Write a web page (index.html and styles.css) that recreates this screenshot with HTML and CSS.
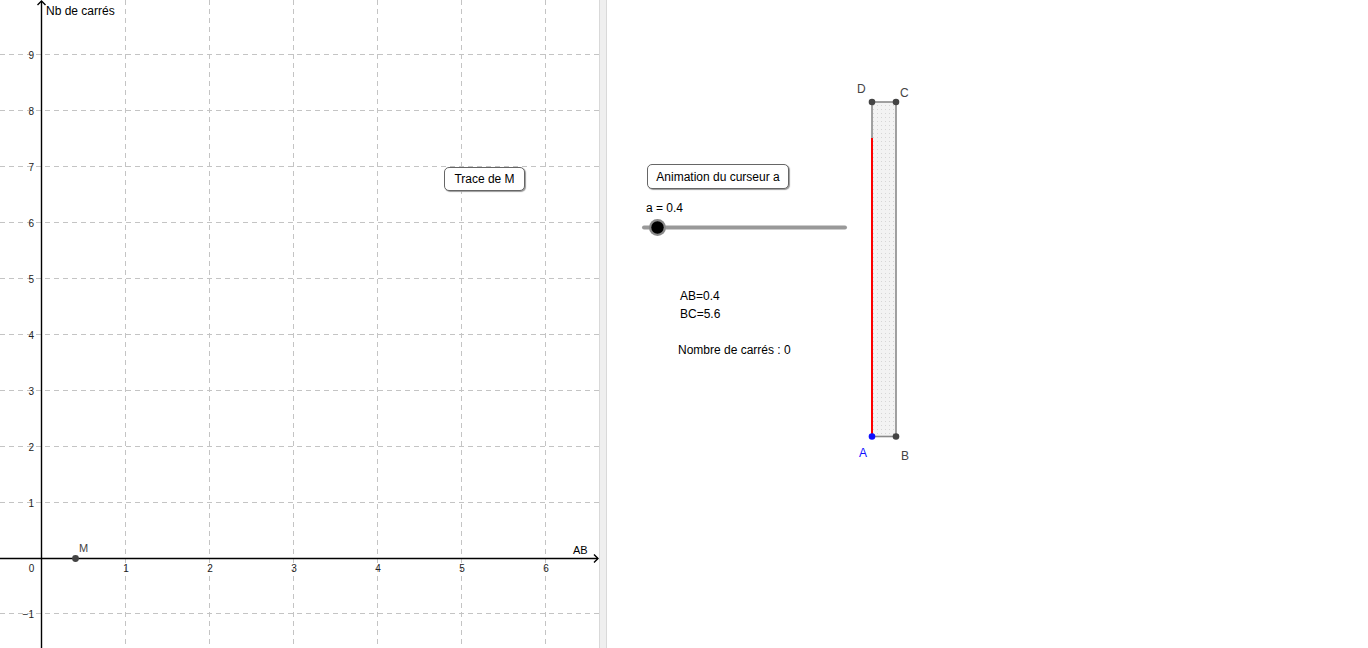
FILE: index.html
```html
<!DOCTYPE html>
<html lang="fr">

<head>
  <meta charset="UTF-8">
  <meta name="viewport" content="width=device-width, initial-scale=1.0">
  <title>Nombre de carrés</title>
  <link rel="stylesheet" href="styles.css">
</head>

<body>
  <div class="applet">
    <!-- vue graphique 1 : repère -->
    <div class="view view-left">
      <svg class="canvas" width="599" height="648" viewBox="0 0 599 648">
        <g class="grid">
          <line x1="125.5" y1="0" x2="125.5" y2="648" />
          <line x1="209.5" y1="0" x2="209.5" y2="648" />
          <line x1="293.5" y1="0" x2="293.5" y2="648" />
          <line x1="377.5" y1="0" x2="377.5" y2="648" />
          <line x1="461.5" y1="0" x2="461.5" y2="648" />
          <line x1="545.5" y1="0" x2="545.5" y2="648" />
          <line x1="0" y1="54.5" x2="599" y2="54.5" />
          <line x1="0" y1="110.5" x2="599" y2="110.5" />
          <line x1="0" y1="166.5" x2="599" y2="166.5" />
          <line x1="0" y1="222.5" x2="599" y2="222.5" />
          <line x1="0" y1="278.5" x2="599" y2="278.5" />
          <line x1="0" y1="334.5" x2="599" y2="334.5" />
          <line x1="0" y1="390.5" x2="599" y2="390.5" />
          <line x1="0" y1="446.5" x2="599" y2="446.5" />
          <line x1="0" y1="502.5" x2="599" y2="502.5" />
          <line x1="0" y1="613.5" x2="599" y2="613.5" />
        </g>
        <g class="axes">
          <line x1="41.5" y1="1" x2="41.5" y2="648" />
          <polyline points="37.5,5 41.5,1 45.5,5" />
          <line x1="0" y1="558.5" x2="598" y2="558.5" />
          <polyline points="594,554.5 598,558.5 594,562.5" />
        </g>
        <g class="ticks-y">
          <text x="34" y="59">9</text>
          <text x="34" y="115">8</text>
          <text x="34" y="171">7</text>
          <text x="34" y="227">6</text>
          <text x="34" y="283">5</text>
          <text x="34" y="339">4</text>
          <text x="34" y="395">3</text>
          <text x="34" y="451">2</text>
          <text x="34" y="507">1</text>
          <text x="34" y="618">&minus;1</text>
        </g>
        <g class="ticks-x">
          <text x="31.5" y="572">0</text>
          <text x="126" y="572">1</text>
          <text x="210" y="572">2</text>
          <text x="294" y="572">3</text>
          <text x="378" y="572">4</text>
          <text x="462" y="572">5</text>
          <text x="546" y="572">6</text>
        </g>
        <text class="axis-label" x="46" y="15">Nb de carrés</text>
        <text class="axis-label axis-label-x" x="573" y="554">AB</text>
        <circle class="pt" cx="75.5" cy="558.5" r="3.4" />
        <text class="pt-label pt-label-m" x="79" y="552">M</text>
      </svg>
      <button class="ggb-btn btn-trace">Trace de M</button>
    </div>

    <div class="splitter"></div>

    <!-- vue graphique 2 : rectangle et curseur -->
    <div class="view view-right">
      <svg class="canvas" width="761" height="648" viewBox="607 0 761 648">
        <defs>
          <pattern id="dots" width="4" height="4" patternUnits="userSpaceOnUse">
            <rect width="4" height="4" fill="#f3f3f3" />
            <rect x="1" y="1" width="1" height="1" fill="#d6d6d6" />
          </pattern>
        </defs>
        <text class="txt" x="646" y="212">a = 0.4</text>
        <line class="slider-track" x1="644" y1="227.5" x2="845" y2="227.5" />
        <circle class="slider-halo" cx="657.5" cy="227.5" r="8.5" />
        <circle class="slider-knob" cx="657.5" cy="227.5" r="6.2" />

        <text class="txt" x="680" y="300">AB=0.4</text>
        <text class="txt" x="680" y="318">BC=5.6</text>
        <text class="txt" x="678" y="354">Nombre de carrés : 0</text>

        <rect class="rect-fill" x="872" y="102" width="24" height="334.5" />
        <line class="seg-red" x1="872" y1="138" x2="872" y2="436.5" />
        <circle class="pt" cx="872" cy="102" r="3.3" />
        <circle class="pt" cx="896" cy="102" r="3.3" />
        <circle class="pt" cx="896" cy="436.5" r="3.3" />
        <circle class="pt pt-blue" cx="872" cy="436.5" r="3.3" />
        <text class="pt-label" x="857" y="93">D</text>
        <text class="pt-label" x="900" y="97">C</text>
        <text class="pt-label pt-label-a" x="859" y="457">A</text>
        <text class="pt-label" x="901" y="460">B</text>
      </svg>
      <button class="ggb-btn btn-anim">Animation du curseur a</button>
    </div>
  </div>
</body>

</html>
```

FILE: styles.css
```css
* {
  margin: 0;
  padding: 0;
  box-sizing: border-box;
}

body {
  background-color: white;
  font-family: "Liberation Sans", Arial, sans-serif;
  overflow: hidden;
}

.applet {
  display: flex;
  width: 1368px;
  height: 648px;
}

.view {
  position: relative;
  height: 648px;
  overflow: hidden;
}

.view-left {
  width: 599px;
}

.view-right {
  flex: 1;
}

.canvas {
  display: block;
}

.splitter {
  width: 8px;
  height: 648px;
  background-color: #efefef;
  border-left: 1px solid #d9d9d9;
  border-right: 1px solid #d9d9d9;
}

.grid line {
  stroke: #c4c4c4;
  stroke-width: 1;
  stroke-dasharray: 5 4;
}

.axes line,
.axes polyline {
  stroke: black;
  stroke-width: 1.4;
  fill: none;
}

.ticks-y text,
.ticks-x text {
  font-size: 10px;
  fill: #222;
}

.ticks-y text {
  text-anchor: end;
}

.ticks-x text {
  text-anchor: middle;
}

.axis-label {
  font-size: 12px;
  fill: black;
}

.axis-label-x {
  font-size: 11px;
}

.pt {
  fill: #444;
}

.pt-blue {
  fill: #1010ff;
}

.pt-label {
  font-size: 12px;
  fill: #444;
}

.pt-label-m {
  font-size: 11px;
}

.pt-label-a {
  fill: #1010ff;
}

.txt {
  font-size: 12px;
  fill: black;
}

.slider-track {
  stroke: #999;
  stroke-width: 4;
  stroke-linecap: round;
}

.slider-halo {
  fill: #8a8a8a;
}

.slider-knob {
  fill: black;
}

.rect-fill {
  fill: url(#dots);
  stroke: #8a8a8a;
  stroke-width: 1.6;
}

.seg-red {
  stroke: #ff0000;
  stroke-width: 2;
}

.ggb-btn {
  position: absolute;
  height: 24px;
  background-color: white;
  border: 1px solid #666;
  border-radius: 5px;
  box-shadow: 1px 1px 1px #999;
  font-family: "Liberation Sans", Arial, sans-serif;
  font-size: 12px;
  color: black;
  text-align: center;
}

.btn-trace {
  left: 444px;
  top: 167px;
  width: 81px;
}

.btn-anim {
  left: 40px;
  top: 164px;
  width: 142px;
  height: 25px;
}
```
